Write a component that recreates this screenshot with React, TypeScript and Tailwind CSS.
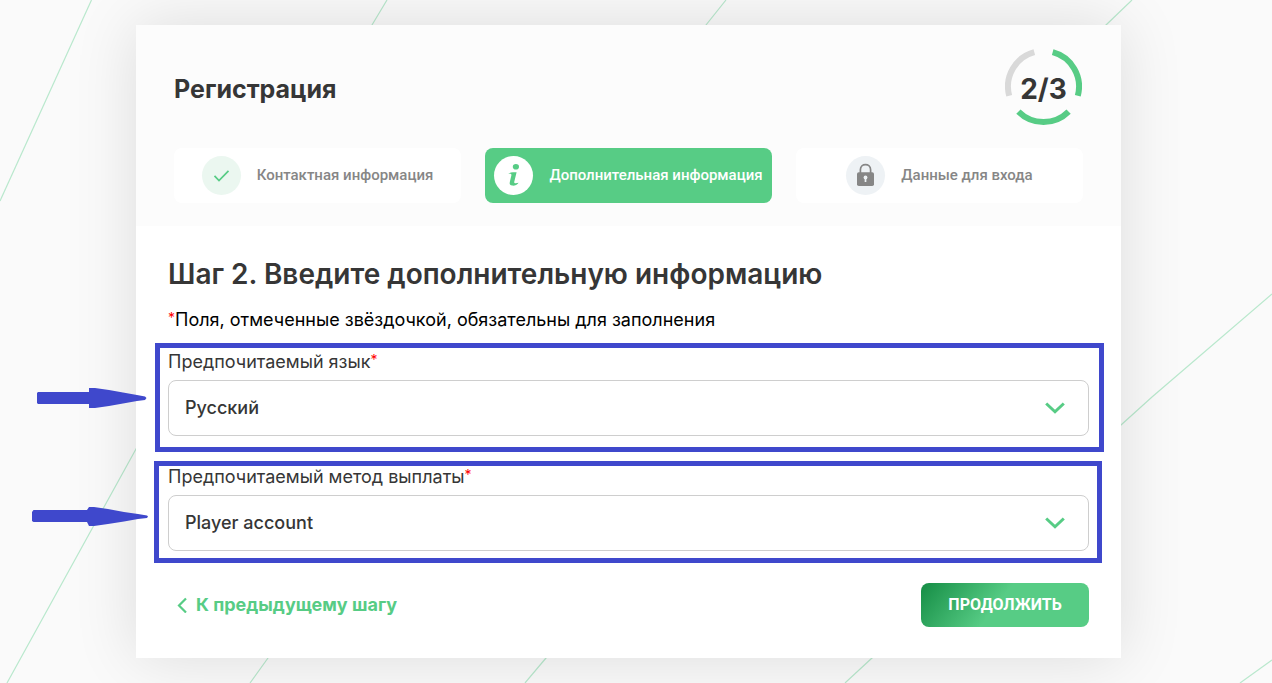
import React, { useState } from 'react';
import { clsx } from 'clsx';

type StepState = 'done' | 'active' | 'locked';

interface StepTabProps {
  label: string;
  state: StepState;
  icon: React.ReactNode;
}

interface SelectFieldProps {
  id: string;
  label: string;
  value: string;
  options: string[];
  onChange: (value: string) => void;
  children?: React.ReactNode;
}

function CheckIcon() {
  return (
    <svg width="39" height="39" viewBox="0 0 39 39" fill="none" aria-hidden="true">
      <path d="M12.5 19.8L17 24.5L26.5 14.8" stroke="#57cc85" strokeWidth="1.7" />
    </svg>
  );
}

function InfoIcon() {
  return (
    <svg width="39" height="39" viewBox="0 0 39 39" fill="none" aria-hidden="true">
      <ellipse cx="21.9" cy="10.7" rx="3.1" ry="2.8" fill="#57cc85" />
      <path d="M14.4 17.9C15.5 16.4 18.5 16.1 22.6 16.2L20.2 26C20 27.4 21.8 27.5 24.6 26.7C23.3 28.9 20.6 29.8 18.4 29.6C16 29.4 15.3 28 15.8 26L17.4 19.2C17.6 18 16.4 17.6 14.4 17.9Z" fill="#57cc85" />
    </svg>
  );
}

function LockIcon() {
  return (
    <svg width="39" height="39" viewBox="0 0 39 39" fill="none" aria-hidden="true">
      <path d="M14.4 18V13.8C14.4 7 24.6 7 24.6 13.8V18" stroke="#868686" strokeWidth="1.7" />
      <rect x="11" y="16.2" width="17" height="13.8" rx="1.8" fill="#868686" />
      <circle cx="19.5" cy="21.4" r="1.9" fill="#eef2f5" />
      <path d="M19.5 22V26" stroke="#eef2f5" strokeWidth="1.7" />
    </svg>
  );
}

function ProgressRing({ text }: { text: string }) {
  return (
    <div className="relative mr-px flex size-[77px] items-center justify-center">
      <svg className="absolute inset-0" width="77" height="77" viewBox="0 0 77 77" fill="none" strokeWidth="6" aria-hidden="true">
        <path d="M47.7 4.2A35.5 35.5 0 0 1 72.8 47.7" stroke="#57cc85" />
        <path d="M63.6 63.6A35.5 35.5 0 0 1 13.4 63.6" stroke="#57cc85" />
        <path d="M4.2 47.7A35.5 35.5 0 0 1 29.3 4.2" stroke="#d9d9d9" />
      </svg>
      <span className="pt-1 text-[28px] leading-8 font-bold">{text}</span>
    </div>
  );
}

function StepTab({ label, state, icon }: StepTabProps) {
  return (
    <li
      aria-current={state === 'active' ? 'step' : undefined}
      className={clsx(
        'flex h-[55px] items-center justify-center gap-4 rounded-lg font-[Roboto] text-[15px] font-medium whitespace-nowrap',
        state === 'active' ? 'bg-[#57cc85] text-white' : 'bg-white text-[#868686]'
      )}
    >
      <span
        className={clsx(
          'size-[39px] shrink-0 rounded-full',
          state === 'done' && 'bg-[#ebf7f0]',
          state === 'active' && 'bg-white',
          state === 'locked' && 'bg-[#eef2f5]'
        )}
      >
        {icon}
      </span>
      {label}
    </li>
  );
}

function Required() {
  return <span className="align-[3px] text-[14px] leading-none text-[#ff0000]">*</span>;
}

function SelectField({ id, label, value, options, onChange, children }: SelectFieldProps) {
  return (
    <div className="relative">
      <label htmlFor={id} className="block h-8 text-[18px] leading-7">
        {label}
        <Required />
      </label>
      <div className="relative">
        <select
          id={id}
          value={value}
          onChange={(e) => onChange(e.target.value)}
          className="block h-14 w-full appearance-none rounded-lg border border-[#cecece] bg-white px-4 pb-0.5 text-[18px] font-medium"
        >
          {options.map((option) => (
            <option key={option}>{option}</option>
          ))}
        </select>
        <svg
          className="pointer-events-none absolute top-[22px] right-6"
          width="20"
          height="12"
          viewBox="0 0 20 12"
          fill="none"
          aria-hidden="true"
        >
          <path d="M1.2 1.5L10 9.8L18.8 1.5" stroke="#57cc85" strokeWidth="3" />
        </svg>
      </div>
      {children}
    </div>
  );
}

function BackgroundLines() {
  return (
    <svg
      className="absolute inset-0"
      width="1272"
      height="683"
      viewBox="0 0 1272 683"
      fill="none"
      stroke="#b9e8cd"
      strokeWidth="1.2"
      aria-hidden="true"
    >
      <path d="M91.5 0L0 201" />
      <path d="M387 0L372 25L136 449L7 683" />
      <path d="M726 0L706 25L268 658L250 683" />
      <path d="M1132 0L1106 25L546 658L525 683" />
      <path d="M1272 294L1152 397L1121 425L872 658L845 683" />
      <path d="M1272 660L1240 683" />
    </svg>
  );
}

export default function App() {
  const [language, setLanguage] = useState('Русский');
  const [payout, setPayout] = useState('Player account');

  return (
    <div className="relative min-h-screen overflow-hidden bg-[#fafafa] pt-[25px] pr-[15px] pb-[25px] font-[Inter,sans-serif] text-[#363636]">
      <BackgroundLines />
      <main className="relative mx-auto max-w-[985px] bg-white shadow-[0_0_60px_rgba(0,0,0,0.12)]">
        <header className="bg-[#fcfcfc] px-[38px] py-[23px]">
          <div className="flex items-center justify-between">
            <h1 className="pt-1 text-[25px] leading-8 font-bold">Регистрация</h1>
            <ProgressRing text="2/3" />
          </div>
          <ol className="mt-[23px] grid grid-cols-3 gap-6">
            <StepTab label="Контактная информация" state="done" icon={<CheckIcon />} />
            <StepTab label="Дополнительная информация" state="active" icon={<InfoIcon />} />
            <StepTab label="Данные для входа" state="locked" icon={<LockIcon />} />
          </ol>
        </header>

        <form className="px-8 pt-7 pb-[31px]" onSubmit={(e) => e.preventDefault()}>
          <h2 className="text-[28px] leading-10 font-semibold">Шаг 2. Введите дополнительную информацию</h2>
          <p className="mt-3 text-[18px] leading-7 text-black">
            <Required />
            Поля, отмеченные звёздочкой, обязательны для заполнения
          </p>

          <div className="mt-[14px] flex flex-col gap-[27px]">
            <SelectField
              id="language"
              label="Предпочитаемый язык"
              value={language}
              options={['Русский', 'English']}
              onChange={setLanguage}
            >
              <div className="pointer-events-none absolute -top-[5px] -right-[15px] -bottom-4 -left-[13px] border-5 border-[#3f48cc]" />
              <svg className="absolute top-10 -left-[131px]" width="110" height="20" viewBox="0 0 110 20" fill="#3f48cc" aria-hidden="true">
                <path d="M1 4H52V0H58L72 2L86 4.5L100 7L108 8.5L109.5 10L108 12L100 13L86 15.5L72 18L58 20H52V16H1L0 15V5Z" />
              </svg>
            </SelectField>
            <SelectField
              id="payout"
              label="Предпочитаемый метод выплаты"
              value={payout}
              options={['Player account', 'Skrill']}
              onChange={setPayout}
            >
              <div className="pointer-events-none absolute -top-[2px] -right-[13px] -bottom-3 -left-[14px] border-5 border-[#3f48cc]" />
              <svg className="absolute top-11 -left-[136px]" width="116" height="19" viewBox="0 0 116 19" fill="#3f48cc" aria-hidden="true">
                <path d="M1.5 3H55L57 0H62L76 2L92 5L106 7L115 8.5L116 9.5L115 11L106 12L92 14.5L76 17L62 19H57L55 15H1.5L0 14V5Z" />
              </svg>
            </SelectField>
          </div>

          <div className="mt-8 flex items-center justify-between">
            <a href="#" className="flex items-center gap-2 pl-[9px] text-[18px] leading-6 font-bold text-[#57cc85]">
              <svg width="11" height="16" viewBox="0 0 11 16" fill="none" aria-hidden="true">
                <path d="M9 1.5L2 8.5L9 15.5" stroke="#57cc85" strokeWidth="2.2" />
              </svg>
              К предыдущему шагу
            </a>
            <button
              type="submit"
              className="h-11 w-[168px] rounded-lg bg-linear-[128deg,#158d45_0%,#57cc85_46%] font-[Roboto] text-[16px] font-bold text-white"
            >
              ПРОДОЛЖИТЬ
            </button>
          </div>
        </form>
      </main>
    </div>
  );
}
